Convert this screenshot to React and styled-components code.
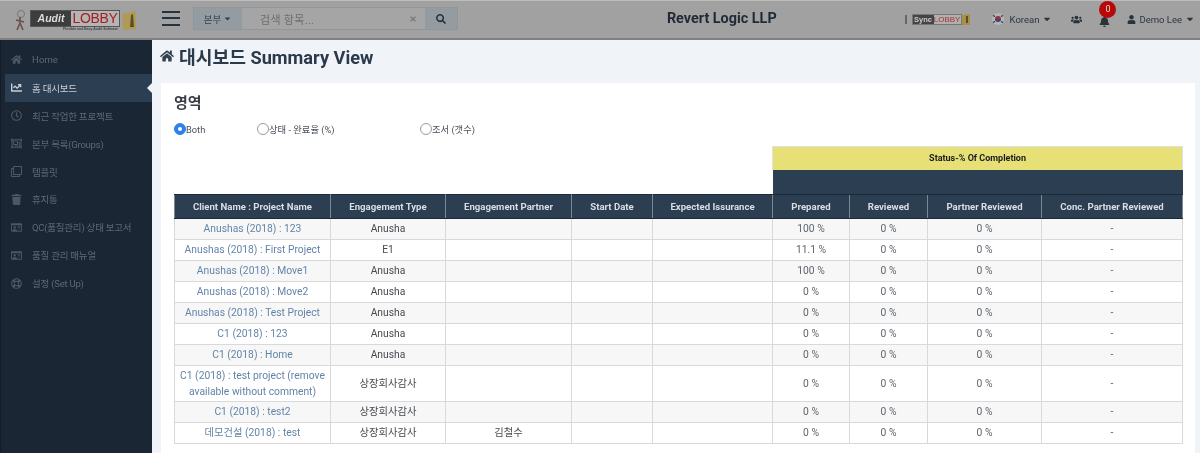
import React from "react";
import styled, { createGlobalStyle } from "styled-components";
import { FaHome, FaChartLine, FaRegClock, FaRegObjectGroup, FaRegClone, FaTrash, FaRegIdCard, FaRegLifeRing, FaSearch, FaTimes, FaUsers, FaBell, FaUser, FaCaretDown } from "react-icons/fa";

const Global = createGlobalStyle`
  html, body { margin: 0; padding: 0; height: 100%; overflow: hidden; background: #f0f3f7; }
  body { font-family: Roboto, "Noto Sans CJK KR", sans-serif; }
  * { box-sizing: border-box; }
`;
const Page = styled.div`width: 1200px; height: 453px; overflow: hidden; display: flex; flex-direction: column; filter: blur(0.35px);`;
const TopBar = styled.header`
  height: 40px; flex: none; background: #a1a1a1; border-top: 1px solid #bdbdbd; border-bottom: 2px solid #808080;
  display: flex; align-items: center; position: relative;
`;
const Logo = styled.div`width: 162px; flex: none; padding-left: 15px; display: flex; align-items: center; height: 100%;`;
const LogoBlock = styled.div`display: flex; flex-direction: column; align-items: flex-end; margin-left: 4px; margin-top: 3px;`;
const LogoBadge = styled.div`display: flex; height: 17px; border: 1px solid #555; width: 90px;`;
const LogoDark = styled.span`background: #3d3d3d; color: #ddd; font: italic 700 10.5px/15px "Liberation Sans", sans-serif; width: 40px; text-align: center;`;
const LogoRed = styled.span`flex: 1; background: #b5b5b5; color: #a52020; font: 400 14px/15px "Liberation Sans", sans-serif; text-align: center; letter-spacing: -.3px;`;
const LogoTag = styled.span`font: 700 3.5px/5px "Liberation Sans", sans-serif; color: #444; margin-right: 2px;`;
const Burger = styled.div`width: 18px; height: 15px; flex: none; border-top: 2px solid #26333f; border-bottom: 2px solid #26333f; position: relative; margin: -3px 13px 0 0;
  &::after { content: ""; position: absolute; left: 0; right: 0; top: 4.5px; height: 2px; background: #26333f; }
`;
const Search = styled.div`width: 265px; height: 23px; display: flex; border: 1px solid #8f979e; background: #a5a5a5; margin-top: -2px;`;
const SearchDrop = styled.div`width: 48px; background: #949ba1; color: #33404c; font-size: 9.5px; display: flex; align-items: center; justify-content: center; gap: 2px;`;
const SearchInput = styled.div`flex: 1; color: #6e6e6e; font-size: 11px; padding-left: 18px; display: flex; align-items: center; justify-content: space-between; padding-right: 8px; letter-spacing: .3px;`;
const SearchButton = styled.div`width: 32px; background: #949ba1; color: #26333f; display: flex; align-items: center; justify-content: center; font-size: 10px;`;
const Firm = styled.div`flex: 1; text-align: center; font-size: 14.4px; font-weight: 700; color: #1f2a35; margin-left: 82px; margin-top: -3px; white-space: nowrap;`;
const Tools = styled.div`display: flex; align-items: center; color: #2d3640; font-size: 9.5px; padding-right: 5px; margin-top: -1px;`;
const Sync = styled.div`display: flex; align-items: center; margin-right: 22px;`;
const SyncBadge = styled.div`display: flex; height: 11px; width: 50px; border: 1px solid #777; margin-left: 4px;`;
const SyncDark = styled.span`background: #444; color: #ccc; font: 700 7.5px/9px "Liberation Sans", sans-serif; width: 21px; text-align: center;`;
const SyncRed = styled.span`flex: 1; background: #b0b0b0; color: #a33; font: 400 8px/9px "Liberation Sans", sans-serif; text-align: center;`;
const Flag = styled.svg`width: 12px; height: 12px; margin-right: 6px; flex: none;`;
const ToolText = styled.span`display: inline-flex; align-items: center; gap: 3px; margin-left: ${p => p.$ml || 0}px;`;
const ToolIcon = styled.span`display: inline-flex; font-size: 11px; color: #2a323a; margin-left: ${p => p.$ml}px;`;
const BellWrap = styled.span`display: inline-flex; font-size: 11px; color: #2a323a; margin-left: 17px; margin-top: 4px; position: relative;`;
const Badge = styled.span`position: absolute; left: 0; top: -15px; width: 17px; height: 17px; border-radius: 50%; background: #b80808; color: #e8d8d8; font-size: 9px; display: flex; align-items: center; justify-content: center;`;
const Body = styled.div`flex: 1; display: flex; min-height: 0;`;
const Sidebar = styled.nav`width: 152px; flex: none; background: #1a2633; padding-top: 6px; display: flex; flex-direction: column; border-left: 1px solid #141d26;`;
const NavItem = styled.div`
  height: 27.9px; flex: none; margin-left: ${p => p.$active ? 4 : 0}px; padding-left: ${p => p.$active ? 4 : 8}px;
  display: flex; align-items: center; gap: 9px; font-size: 9.5px; position: relative;
  letter-spacing: ${p => p.$latin ? ".1px" : "-.22px"};
  color: ${p => p.$active ? "#c9d0d6" : "#5d6974"};
  background: ${p => p.$active ? "#2c3e52" : "transparent"};
  ${p => p.$active && `&::after { content: ""; position: absolute; right: 0; top: 9px; border: 5px solid transparent; border-right-color: #f0f3f7; border-left: 0; }`}
`;
const NavIcon = styled.span`width: 14px; display: flex; justify-content: center; font-size: 11px; flex: none; color: ${p => p.$active ? "#c9d0d6" : "#4d5864"};`;
const Main = styled.main`flex: 1; min-width: 0; background: #f0f3f7; padding: 0 5px 0 9px;`;
const Title = styled.h1`margin: 0; height: 43px; display: flex; align-items: center; gap: 5px; font-size: 18.2px; font-weight: 700; color: #2b3a4a; padding-bottom: 12px;`;
const TitleIcon = styled.span`display: inline-flex; font-size: 14px; color: #33414f; margin-left: -1px;`;
const Card = styled.section`background: #fff; padding: 11px 8px 0 13px; height: 370px;`;
const Heading = styled.h2`margin: 0 0 9px; font-size: 15px; line-height: 19px; font-weight: 700; color: #3a3f45;`;
const Radios = styled.div`display: flex; height: 14px; align-items: center;`;
const RadioItem = styled.label`display: flex; align-items: center; font-size: 9.3px; color: #4a5058; width: ${p => p.$w}px;`;
const RadioDot = styled.span`
  width: 12px; height: 12px; border-radius: 50%; flex: none; display: flex; align-items: center; justify-content: center;
  background: ${p => p.$on ? "#2f80ed" : "#fff"}; border: 1px solid ${p => p.$on ? "#2f80ed" : "#9a9a9a"};
  &::after { content: ""; width: 4px; height: 4px; border-radius: 50%; background: ${p => p.$on ? "#fff" : "transparent"}; }
`;
const Table = styled.table`border-collapse: collapse; table-layout: fixed; width: 1008px; margin-top: 10px; font-size: 10px; color: #444;`;
const Blank = styled.th`border: 0; background: #fff;`;
const Band = styled.th`height: 23px; background: #e6e077; color: #1c1c1c; font-size: 9px; font-weight: 700; border: 1px solid #dfe2e5; border-bottom: 0; padding: 0;`;
const BandDark = styled.th`height: 25px; background: #2c3e52; border: 0; border-bottom: 1px solid #1c2a38; padding: 0;`;
const Head = styled.th`height: 24px; background: #2c3e52; color: #d9dee3; font-size: 9.6px; font-weight: 700; border: 1px solid #7c8792; border-top: 1px solid #1c2a38; border-bottom: 1px solid #1c2a38; padding: 0;`;
const Row = styled.tr`background: ${p => p.$odd ? "#f7f7f7" : "#fff"};`;
const Cell = styled.td`height: ${p => p.$tall ? 36 : 21}px; border: 1px solid #d9d9d9; text-align: center; padding: 0 4px; line-height: 16px; color: ${p => p.$muted ? "#5f656c" : "#464b51"}; font-size: 10.3px;`;
const ClientLink = styled.a`color: #6384a8; text-decoration: none;`;

const nav = [
  [FaHome, "Home", false, true], [FaChartLine, "홈 대시보드", true], [FaRegClock, "최근 작업한 프로젝트"], [FaRegObjectGroup, "본부 목록(Groups)"],
  [FaRegClone, "템플릿"], [FaTrash, "휴지통"], [FaRegIdCard, "QC(품질관리) 상태 보고서"], [FaRegIdCard, "품질 관리 매뉴얼"], [FaRegLifeRing, "설정 (Set Up)"],
];
const cols = [156, 115, 126, 81, 120, 77, 78, 114, 141];
const heads = ["Client Name : Project Name", "Engagement Type", "Engagement Partner", "Start Date", "Expected Issurance", "Prepared", "Reviewed", "Partner Reviewed", "Conc. Partner Reviewed"];
const rows = [
  ["Anushas (2018) : 123", "Anusha", "", "100 %"],
  ["Anushas (2018) : First Project", "E1", "", "11.1 %"],
  ["Anushas (2018) : Move1", "Anusha", "", "100 %"],
  ["Anushas (2018) : Move2", "Anusha", "", "0 %"],
  ["Anushas (2018) : Test Project", "Anusha", "", "0 %"],
  ["C1 (2018) : 123", "Anusha", "", "0 %"],
  ["C1 (2018) : Home", "Anusha", "", "0 %"],
  ["C1 (2018) : test project (remove available without comment)", "상장회사감사", "", "0 %", true],
  ["C1 (2018) : test2", "상장회사감사", "", "0 %"],
  ["데모건설 (2018) : test", "상장회사감사", "김철수", "0 %"],
];

export default function App() {
  return (
    <Page>
      <Global />
      <TopBar>
        <Logo>
          <svg width="11" height="22" viewBox="0 0 11 22"><circle cx="6" cy="5" r="3.5" fill="none" stroke="#777" /><path d="M5 8v7M2 21l3-7 3 7M1 11l8 2" stroke="#6a5050" strokeWidth="1.6" fill="none" /></svg>
          <LogoBlock>
            <LogoBadge><LogoDark>Audit</LogoDark><LogoRed>LOBBY</LogoRed></LogoBadge>
            <LogoTag>Flexible and Easy Audit Software</LogoTag>
          </LogoBlock>
          <svg width="16" height="22" viewBox="0 0 16 22" style={{ marginLeft: 1 }}><path d="M1 5l14-3v18l-13 1z" fill="#b09a58" /><path d="M10 6l-1 12h4l-1-13z" fill="#5c4f25" /></svg>
        </Logo>
        <Burger />
        <Search>
          <SearchDrop>본부 <FaCaretDown size={9} /></SearchDrop>
          <SearchInput>검색 항목...<FaTimes size={8} color="#7c7c7c" /></SearchInput>
          <SearchButton><FaSearch /></SearchButton>
        </Search>
        <Firm>Revert Logic LLP</Firm>
        <Tools>
          <Sync>
            <svg width="4" height="9" viewBox="0 0 4 9"><path d="M2 0v9" stroke="#666" strokeWidth="2" /></svg>
            <SyncBadge><SyncDark>Sync</SyncDark><SyncRed>LOBBY</SyncRed></SyncBadge>
            <svg width="8" height="11" viewBox="0 0 8 11"><path d="M0 1l8-1v11H0z" fill="#a89048" /><path d="M4 2v7h2V2z" fill="#5c4f25" /></svg>
          </Sync>
          <Flag viewBox="0 0 12 12"><circle cx="6" cy="6" r="6" fill="#b5b5b5" /><path d="M3 6a3 3 0 0 1 6 0z" fill="#a82a35" /><path d="M3 6a3 3 0 0 0 6 0z" fill="#2a4a8a" /><path d="M1 2.5l2 1M1 9.5l2-1M11 2.5l-2 1M11 9.5l-2-1" stroke="#333" strokeWidth="1.1" /></Flag>
          <ToolText>Korean <FaCaretDown size={10} /></ToolText>
          <ToolIcon $ml={19}><FaUsers /></ToolIcon>
          <BellWrap><FaBell /><Badge>0</Badge></BellWrap>
          <ToolIcon $ml={17}><FaUser size={9} /></ToolIcon>
          <ToolText $ml={3}>Demo Lee <FaCaretDown size={10} /></ToolText>
        </Tools>
      </TopBar>
      <Body>
        <Sidebar>
          {nav.map(([Icon, label, active, latin]) => (
            <NavItem key={label} $active={active} $latin={latin}><NavIcon $active={active}><Icon /></NavIcon>{label}</NavItem>
          ))}
        </Sidebar>
        <Main>
          <Title><TitleIcon><FaHome /></TitleIcon>대시보드 Summary View</Title>
          <Card>
            <Heading>영역</Heading>
            <Radios>
              <RadioItem $w={83}><RadioDot $on />Both</RadioItem>
              <RadioItem $w={163}><RadioDot />상태 - 완료율 (%)</RadioItem>
              <RadioItem $w={100}><RadioDot />조서 (갯수)</RadioItem>
            </Radios>
            <Table>
              <colgroup>{cols.map((w, i) => <col key={i} style={{ width: w }} />)}</colgroup>
              <thead>
                <tr><Blank colSpan={5} /><Band colSpan={4}>Status-% Of Completion</Band></tr>
                <tr><Blank colSpan={5} /><BandDark colSpan={4} /></tr>
                <tr>{heads.map(h => <Head key={h}>{h}</Head>)}</tr>
              </thead>
              <tbody>
                {rows.map(([client, type, partner, pct, tall], i) => (
                  <Row key={client} $odd={i % 2 === 0}>
                    <Cell $tall={tall}><ClientLink>{client}</ClientLink></Cell>
                    <Cell>{type}</Cell>
                    <Cell>{partner}</Cell>
                    <Cell />
                    <Cell />
                    <Cell $muted>{pct}</Cell>
                    <Cell $muted>0 %</Cell>
                    <Cell $muted>0 %</Cell>
                    <Cell $muted>-</Cell>
                  </Row>
                ))}
              </tbody>
            </Table>
          </Card>
        </Main>
      </Body>
    </Page>
  );
}
